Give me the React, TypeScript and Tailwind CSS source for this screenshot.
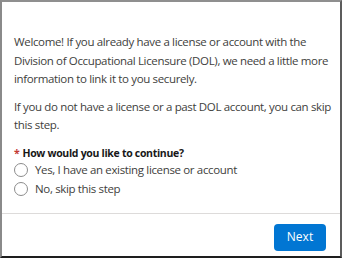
export default function App() {
  const options = ["Yes, I have an existing license or account", "No, skip this step"];
  return (
    <div
      className="flex h-[258px] w-[342px] flex-col border-t-2 border-l-2 border-t-[#8f8f8f] border-l-[#8a8a8a] border-r-2 border-b-2 border-r-[#5c5c5c] border-b-[#1e1e1e] bg-white text-[#3e3e3c]"
      style={{ fontFamily: '"Open Sans", "Noto Sans", sans-serif' }}
    >
      <div className="pl-3 pr-2 pt-[31px]">
        <p className="text-[11.5px] leading-[18.5px] tracking-[-0.35px]">
          Welcome! If you already have a license or account with the Division of Occupational Licensure (DOL), we need a
          little more information to link it to you securely.
        </p>
        <p className="mt-[9px] text-[11.5px] leading-[18px] tracking-[-0.35px]">
          If you do not have a license or a past DOL account, you can skip this step.
        </p>
        <div className="mt-[11px] flex items-center text-[10.5px] font-bold leading-[16px] tracking-[-0.3px] text-[#181818]">
          <span className="mr-[3px] text-[#c23934]">*</span>
          How would you like to continue?
        </div>
        <div className="flex flex-col">
          {options.map((o) => (
            <label key={o} className="flex h-[19px] items-center gap-[7px] text-[11.5px] tracking-[-0.35px]">
              <span className="h-[14px] w-[14px] rounded-full border border-[#8c8c8c] bg-white" />
              {o}
            </label>
          ))}
        </div>
      </div>
      <div className="mt-[14px] border-t border-[#dddbda]" />
      <div className="flex flex-1 items-start justify-end px-[14px] pt-[10px]">
        <button className="h-[27px] w-[52px] rounded-[4px] bg-[#0176d3] text-[12px] text-white">Next</button>
      </div>
    </div>
  );
}
